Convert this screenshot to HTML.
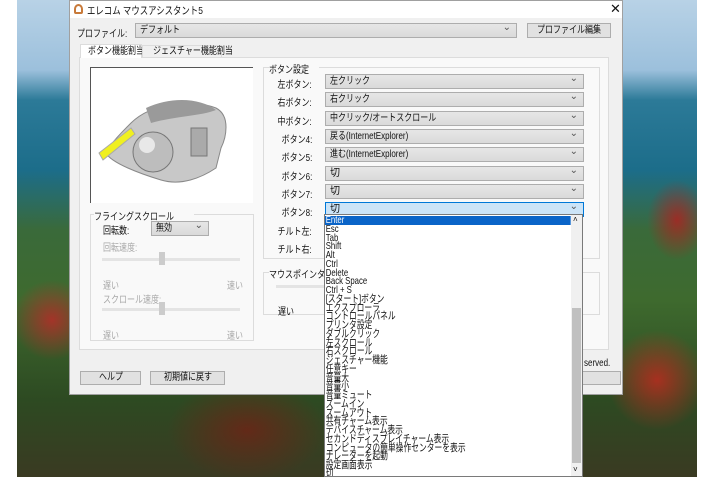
<!DOCTYPE html>
<html><head><meta charset="utf-8"><style>
*{margin:0;padding:0;box-sizing:border-box}
body{width:715px;height:477px;overflow:hidden;background:#fff;font-family:"Liberation Sans","Noto Sans CJK JP",sans-serif;font-size:10px;color:#111;position:relative}
.a{position:absolute;white-space:nowrap}
.n{display:inline-block;transform:scaleX(.8);transform-origin:left center}
.bg{left:17px;top:0;width:680px;height:477px;overflow:hidden;
background:
radial-gradient(ellipse 40px 40px at 35px 320px,rgba(190,40,40,.8) 0,rgba(200,40,40,0) 100%),
radial-gradient(ellipse 30px 40px at 660px 220px,rgba(180,30,30,.8) 0,rgba(180,30,30,0) 100%),
radial-gradient(ellipse 50px 50px at 640px 380px,rgba(196,40,30,.8) 0,rgba(196,40,30,0) 100%),
radial-gradient(ellipse 80px 50px at 230px 430px,rgba(120,30,20,.7) 0,rgba(120,30,20,0) 100%),
linear-gradient(180deg,#b8d2e6 0,#9cc0dc 70px,#2c7a98 100px,#1c6d8a 170px,#3a6a3a 230px,#3e6a2e 300px,#2d4a22 400px,#3a3a22 477px)}
.dlg{left:69px;top:0;width:554px;height:395px;background:#f0f0f0;border:1px solid #a0a0a0}
.title{left:0;top:0;width:552px;height:17px;background:#fff}
.cb{background:linear-gradient(#e6e6e6,#dadada);border:1px solid #adadad;height:15px;padding-left:4px;line-height:13px;font-size:10px}
.cb:after{content:"⌄";position:absolute;right:5px;top:-3px;font-size:10px;color:#555}
.btn{background:#e1e1e1;border:1px solid #adadad;text-align:center;line-height:12px;font-size:10px}
.grp{border:1px solid #dcdcdc}
.lbl{font-size:10px;text-align:right;width:60px}
.lbl .n{transform-origin:right center}
.list{left:324px;top:214px;width:259px;height:263px;background:#fff;border:1px solid #7a7a7a;font-size:10.5px;line-height:8.75px;padding-top:1px;overflow:hidden}
.list div{padding-left:1px;white-space:nowrap;width:320px;transform:scaleX(.74);transform-origin:left}
.list .sel{background:#0a64c8;color:#fff;width:332px}
.gray{color:#a8a8a8}
</style></head><body>
<div class="a bg"></div>
<div class="a dlg">
 <div class="a title"></div>
 <div class="a" style="left:4px;top:3px;width:9px;height:10px;border:2px solid #c87a3a;border-radius:50% 50% 20% 20%"></div>
 <div class="a" style="left:17px;top:2px;font-size:10.5px"><span class="n">エレコム マウスアシスタント5</span></div>
 <div class="a" style="left:540px;top:0px;font-size:13px">✕</div>
 <div class="a" style="left:7px;top:24px"><span class="n">プロファイル:</span></div>
 <div class="a cb" style="left:65px;top:22px;width:382px"><span class="n">デフォルト</span></div>
 <div class="a btn" style="left:457px;top:22px;width:84px;height:15px;line-height:13px"><span class="n" style="transform-origin:center">プロファイル編集</span></div>
 <div class="a" style="left:9px;top:56px;width:530px;height:293px;border:1px solid #dcdcdc;background:#f9f9f9"></div>
 <div class="a" style="left:10px;top:43px;width:62px;height:14px;background:#fff;border:1px solid #dcdcdc;border-bottom:none;text-align:center;line-height:13px"><span class="n" style="transform-origin:center">ボタン機能割当</span></div>
 <div class="a" style="left:72px;top:44px;width:80px;height:13px;background:#f0f0f0;border:1px solid #dcdcdc;text-align:center;line-height:12px"><span class="n" style="transform-origin:center">ジェスチャー機能割当</span></div>
 <div class="a" style="left:20px;top:66px;width:163px;height:136px;background:#fff;border-top:1px solid #555;border-left:1px solid #555">
  <svg width="163" height="136" viewBox="0 0 163 136">
   <path d="M40 55 C60 35 100 30 125 40 C140 48 135 70 130 80 L125 100 C110 110 90 118 70 112 C50 106 20 95 15 85 C20 75 30 65 40 55Z" fill="#c8c8c8" stroke="#888"/>
   <path d="M55 40 C80 28 110 30 125 42 C110 48 85 48 60 55Z" fill="#9a9a9a"/>
   <path d="M8 85 L40 60 L44 66 L12 92Z" fill="#f0f020" stroke="#aaa"/>
   <circle cx="62" cy="84" r="20" fill="#bdbdbd" stroke="#777"/>
   <circle cx="56" cy="77" r="8" fill="#e8e8e8"/>
   <rect x="100" y="60" width="16" height="28" fill="#aaa" stroke="#777"/>
  </svg>
 </div>
 <div class="a grp" style="left:20px;top:213px;width:164px;height:127px"></div>
 <div class="a" style="left:24px;top:207px;background:#f9f9f9"><span class="n">フライングスクロール</span></div>
 <div class="a" style="left:33px;top:221px"><span class="n">回転数:</span></div>
 <div class="a cb" style="left:81px;top:220px;width:58px"><span class="n">無効</span></div>
 <div class="a gray" style="left:33px;top:238px"><span class="n">回転速度:</span></div>
 <div class="a" style="left:32px;top:257px;width:138px;height:3px;background:#e4e4e4"></div>
 <div class="a" style="left:89px;top:251px;width:6px;height:13px;background:#ccc"></div>
 <div class="a gray" style="left:33px;top:276px"><span class="n">遅い</span></div><div class="a gray" style="left:157px;top:276px"><span class="n">速い</span></div>
 <div class="a gray" style="left:33px;top:290px"><span class="n">スクロール速度:</span></div>
 <div class="a" style="left:32px;top:307px;width:138px;height:3px;background:#e4e4e4"></div>
 <div class="a" style="left:89px;top:301px;width:6px;height:13px;background:#ccc"></div>
 <div class="a gray" style="left:33px;top:326px"><span class="n">遅い</span></div><div class="a gray" style="left:157px;top:326px"><span class="n">速い</span></div>

 <div class="a grp" style="left:193px;top:66px;width:337px;height:192px"></div>
 <div class="a" style="left:199px;top:60px;background:#f9f9f9"><span class="n">ボタン設定</span></div>
 <div class="a lbl" style="left:182px;top:75px"><span class="n">左ボタン:</span></div><div class="a cb" style="left:255px;top:73px;width:259px"><span class="n">左クリック</span></div>
 <div class="a lbl" style="left:182px;top:93px"><span class="n">右ボタン:</span></div><div class="a cb" style="left:255px;top:91px;width:259px"><span class="n">右クリック</span></div>
 <div class="a lbl" style="left:182px;top:112px"><span class="n">中ボタン:</span></div><div class="a cb" style="left:255px;top:110px;width:259px"><span class="n">中クリック/オートスクロール</span></div>
 <div class="a lbl" style="left:182px;top:130px"><span class="n">ボタン4:</span></div><div class="a cb" style="left:255px;top:128px;width:259px"><span class="n">戻る(InternetExplorer)</span></div>
 <div class="a lbl" style="left:182px;top:148px"><span class="n">ボタン5:</span></div><div class="a cb" style="left:255px;top:146px;width:259px"><span class="n">進む(InternetExplorer)</span></div>
 <div class="a lbl" style="left:182px;top:167px"><span class="n">ボタン6:</span></div><div class="a cb" style="left:255px;top:165px;width:259px">切</div>
 <div class="a lbl" style="left:182px;top:185px"><span class="n">ボタン7:</span></div><div class="a cb" style="left:255px;top:183px;width:259px">切</div>
 <div class="a lbl" style="left:182px;top:203px"><span class="n">ボタン8:</span></div><div class="a cb" style="left:255px;top:201px;width:259px;background:#cce4f7;border-color:#0078d7">切</div>
 <div class="a lbl" style="left:182px;top:222px"><span class="n">チルト左:</span></div>
 <div class="a lbl" style="left:182px;top:240px"><span class="n">チルト右:</span></div>
 <div class="a grp" style="left:193px;top:271px;width:337px;height:43px"></div>
 <div class="a" style="left:199px;top:265px;background:#f9f9f9"><span class="n">マウスポインタの</span></div>
 <div class="a" style="left:206px;top:284px;width:50px;height:3px;background:#e4e4e4"></div>
 <div class="a" style="left:208px;top:302px"><span class="n">遅い</span></div>
 <div class="a" style="left:514px;top:357px"><span class="n">served.</span></div>
 <div class="a btn" style="left:10px;top:370px;width:61px;height:14px"><span class="n" style="transform-origin:center">ヘルプ</span></div>
 <div class="a btn" style="left:80px;top:370px;width:75px;height:14px"><span class="n" style="transform-origin:center">初期値に戻す</span></div>
 <div class="a btn" style="left:505px;top:370px;width:46px;height:14px"></div>
</div>
<div class="a list">
<div class="sel">Enter</div><div>Esc</div><div>Tab</div><div>Shift</div><div>Alt</div><div>Ctrl</div><div>Delete</div><div>Back Space</div><div>Ctrl + S</div><div>[スタート]ボタン</div><div>エクスプローラ</div><div>コントロールパネル</div><div>プリンタ設定</div><div>ダブルクリック</div><div>左スクロール</div><div>右スクロール</div><div>ジェスチャー機能</div><div>任意キー</div><div>音量大</div><div>音量小</div><div>音量ミュート</div><div>ズームイン</div><div>ズームアウト</div><div>共有チャーム表示</div><div>デバイスチャーム表示</div><div>セカンドディスプレイチャーム表示</div><div>コンピュータの簡単操作センターを表示</div><div>ナレーターを起動</div><div>設定画面表示</div><div>切</div>
</div>
<div class="a" style="left:571px;top:215px;width:11px;height:261px;background:#f0f0f0"></div>
<div class="a" style="left:572px;top:308px;width:9px;height:155px;background:#c0c0c0"></div>
<div class="a" style="left:573px;top:215px;font-size:8px">˄</div>
<div class="a" style="left:573px;top:465px;font-size:8px">˅</div>
</body></html>
